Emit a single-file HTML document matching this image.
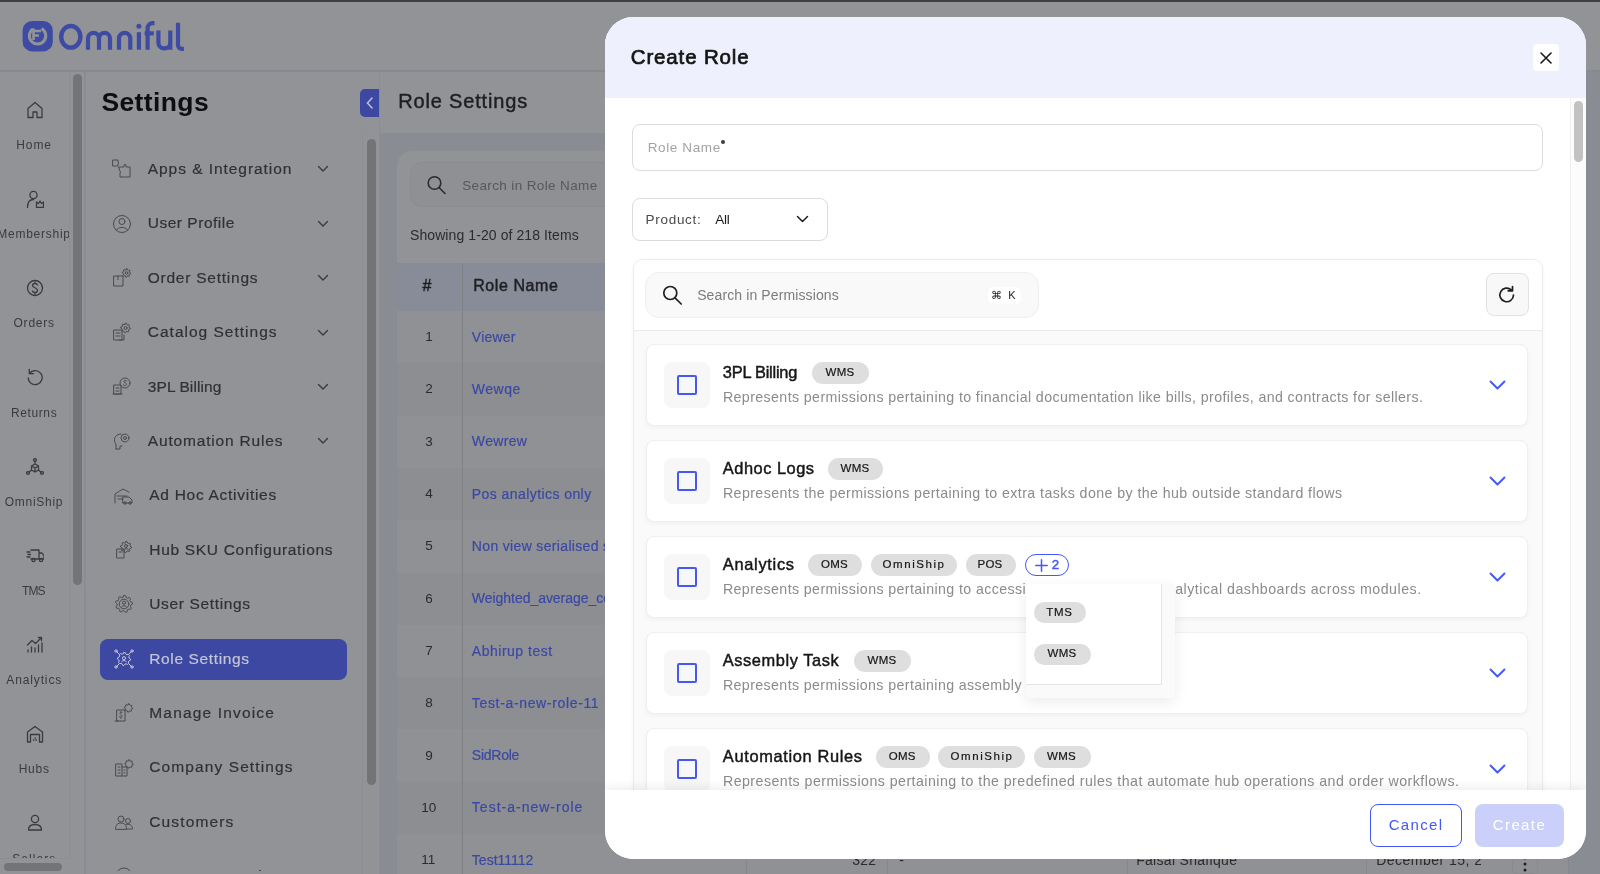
<!DOCTYPE html><html><head><meta charset="utf-8"><style>
html,body{margin:0;padding:0;width:1600px;height:874px;overflow:hidden;}
body{position:relative;font-family:"Liberation Sans", sans-serif;}
.t{position:absolute;white-space:nowrap;line-height:1;}
.r{position:absolute;}
#bg{will-change:transform;position:absolute;left:0;top:0;width:1600px;height:874px;overflow:hidden;}
#modal{will-change:transform;position:absolute;left:605px;top:17px;width:980.5px;height:842px;border-radius:28px;overflow:hidden;background:#fff;}
</style></head><body>
<div id="bg">
<div class="r" style="left:0px;top:0px;width:1600px;height:874px;background:#929397;"></div>
<div class="r" style="left:0px;top:0px;width:1600px;height:2px;background:#3e3f41;"></div>
<div class="r" style="left:0px;top:70px;width:1600px;height:2px;background:#878993;"></div>
<svg class="r" style="left:0px;top:0px;" width="200" height="70" viewBox="0 0 200 70" fill="none"><rect x="22.6" y="21" width="30.2" height="30.4" rx="9.5" fill="#3e4ba4"></rect><path d="M41.5 28.6 A8.2 8.2 0 1 1 33 29" stroke="#929397" stroke-width="3" fill="none"></path><path d="M33.5 28.5 V40 M33.5 31 H41 M34 35.5 H39" stroke="#929397" stroke-width="2.6" fill="none"></path><ellipse cx="70.8" cy="36.8" rx="9.6" ry="10.8" stroke="#3e4ba4" stroke-width="4.4" fill="none"></ellipse><path d="M88 49.7 V38.3 A5.5 5.5 0 0 1 99 38.3 V49.7 M99 38.3 A5.5 5.5 0 0 1 110 38.3 V49.7" stroke="#3e4ba4" stroke-width="4.2" fill="none"></path><path d="M119 49.7 V38.5 A5.65 5.65 0 0 1 130.3 38.5 V49.7" stroke="#3e4ba4" stroke-width="4.2" fill="none"></path><path d="M138.9 32.2 V49.7" stroke="#3e4ba4" stroke-width="4.2"></path><circle cx="138.9" cy="26.3" r="2.5" fill="#3e4ba4"></circle><path d="M147.6 49.7 V28.2 A5 5 0 0 1 152.6 23.2 H154.5 M144.6 33.3 H153.8" stroke="#3e4ba4" stroke-width="4.2" fill="none"></path><path d="M158.4 30.6 V42.5 A5.95 5.95 0 0 0 170.3 42.5 V30.6 M170.3 30.6 V49.7" stroke="#3e4ba4" stroke-width="4.2" fill="none"></path><path d="M178 22.7 V45 A3.8 3.8 0 0 0 181.8 48.8 H183.9" stroke="#3e4ba4" stroke-width="4.2" fill="none"></path></svg>
<div class="r" style="left:69px;top:72px;width:1px;height:786px;background:#8d8e92;"></div>
<div class="r" style="left:84px;top:72px;width:2px;height:802px;background:#8a8c95;"></div>
<div class="r" style="left:73px;top:74px;width:9px;height:511px;background:#737476;border-radius:5px;"></div>
<div class="r" style="left:0px;top:858px;width:69px;height:1px;background:#8d8e92;"></div>
<div class="r" style="left:4px;top:863px;width:58px;height:8px;background:#737476;border-radius:4px;"></div>
<div class="t" style="left: 16.28px; top: 138.9px; font-size: 12px; color: rgb(58, 59, 62); letter-spacing: 0.888px;">Home</div>
<div class="t" style="left: -2.72px; top: 228.1px; font-size: 12px; color: rgb(58, 59, 62); letter-spacing: 0.739px;">Membership</div>
<div class="t" style="left: 13.53px; top: 317.3px; font-size: 12px; color: rgb(58, 59, 62); letter-spacing: 0.765px;">Orders</div>
<div class="t" style="left: 10.88px; top: 406.5px; font-size: 12px; color: rgb(58, 59, 62); letter-spacing: 0.63px;">Returns</div>
<div class="t" style="left: 4.78px; top: 495.7px; font-size: 12px; color: rgb(58, 59, 62); letter-spacing: 0.712px;">OmniShip</div>
<div class="t" style="left: 21.98px; top: 584.9px; font-size: 12px; color: rgb(58, 59, 62); letter-spacing: -0.863px;">TMS</div>
<div class="t" style="left: 6.28px; top: 674.1px; font-size: 12px; color: rgb(58, 59, 62); letter-spacing: 0.873px;">Analytics</div>
<div class="t" style="left: 18.63px; top: 763.3px; font-size: 12px; color: rgb(58, 59, 62); letter-spacing: 0.762px;">Hubs</div>
<div class="t" style="left: 12.28px; top: 852.5px; font-size: 12px; color: rgb(58, 59, 62); letter-spacing: 1.053px;">Sellers</div>
<div class="r" style="left:69px;top:72px;width:1px;height:786px;background:#8d8e92;"></div>
<div class="r" style="left:70px;top:200px;width:3px;height:60px;background:#929397;"></div>
<svg class="r" style="left:25.5px;top:100.7px;" width="18" height="18" viewBox="0 0 18 18" fill="none"><path d="M2 7.5 L9 1.5 L16 7.5 V16.5 H11 V11 H7 V16.5 H2 Z" stroke="#3a3b3e" stroke-width="1.3" fill="none" stroke-linecap="round" stroke-linejoin="round"></path></svg>
<svg class="r" style="left:25.5px;top:189.9px;" width="18" height="18" viewBox="0 0 18 18" fill="none"><circle cx="7.5" cy="5" r="3.6" stroke="#3a3b3e" stroke-width="1.3" fill="none" stroke-linecap="round" stroke-linejoin="round"></circle><path d="M1.5 17.5 C1.5 12 4 9.5 7.5 9.5" stroke="#3a3b3e" stroke-width="1.3" fill="none" stroke-linecap="round" stroke-linejoin="round"></path><path d="M10.5 17.5 V12 L12.5 13.5 L14 11 L15.5 13.5 L17.5 12 V17.5 Z" stroke="#3a3b3e" stroke-width="1.3" fill="none" stroke-linecap="round" stroke-linejoin="round"></path></svg>
<svg class="r" style="left:25.5px;top:279.1px;" width="18" height="18" viewBox="0 0 18 18" fill="none"><circle cx="9" cy="9" r="7.5" stroke="#3a3b3e" stroke-width="1.3" fill="none" stroke-linecap="round" stroke-linejoin="round"></circle><path d="M11.5 6 C11 5 10 4.5 9 4.5 C7.5 4.5 6.5 5.3 6.5 6.5 C6.5 9 11.5 8.5 11.5 11.3 C11.5 12.6 10.4 13.5 9 13.5 C7.8 13.5 6.8 13 6.4 12 M9 3 V4.5 M9 13.5 V15" stroke="#3a3b3e" stroke-width="1.3" fill="none" stroke-linecap="round" stroke-linejoin="round"></path></svg>
<svg class="r" style="left:25.5px;top:368.3px;" width="18" height="18" viewBox="0 0 18 18" fill="none"><path d="M3.5 5.5 A7 7 0 1 1 2.2 10" stroke="#3a3b3e" stroke-width="1.3" fill="none" stroke-linecap="round" stroke-linejoin="round"></path><path d="M3.3 1.5 V5.7 H7.5" stroke="#3a3b3e" stroke-width="1.3" fill="none" stroke-linecap="round" stroke-linejoin="round"></path></svg>
<svg class="r" style="left:25.5px;top:457.5px;" width="18" height="18" viewBox="0 0 18 18" fill="none"><circle cx="9" cy="2" r="1.4" stroke="#3a3b3e" stroke-width="1.3" fill="none" stroke-linecap="round" stroke-linejoin="round"></circle><circle cx="2" cy="15" r="1.4" stroke="#3a3b3e" stroke-width="1.3" fill="none" stroke-linecap="round" stroke-linejoin="round"></circle><circle cx="16" cy="15" r="1.4" stroke="#3a3b3e" stroke-width="1.3" fill="none" stroke-linecap="round" stroke-linejoin="round"></circle><path d="M9 3.4 V6 M5.5 8 L9 6 L12.5 8 V12 L9 14 L5.5 12 Z M5.5 8 L9 10 L12.5 8 M9 10 V14 M5.5 12 L3 14.2 M12.5 12 L15 14.2" stroke="#3a3b3e" stroke-width="1.3" fill="none" stroke-linecap="round" stroke-linejoin="round"></path></svg>
<svg class="r" style="left:25.5px;top:546.7px;" width="18" height="18" viewBox="0 0 18 18" fill="none"><path d="M5 3 H13 V12 H5 M13 6 H16 L18 9 V12 H13" stroke="#3a3b3e" stroke-width="1.3" fill="none" stroke-linecap="round" stroke-linejoin="round"></path><circle cx="7.5" cy="13" r="1.6" stroke="#3a3b3e" stroke-width="1.3" fill="none" stroke-linecap="round" stroke-linejoin="round"></circle><circle cx="15" cy="13" r="1.6" stroke="#3a3b3e" stroke-width="1.3" fill="none" stroke-linecap="round" stroke-linejoin="round"></circle><path d="M1 5 H4 M2 7.5 H4.5 M1 10 H4" stroke="#3a3b3e" stroke-width="1.3" fill="none" stroke-linecap="round" stroke-linejoin="round"></path></svg>
<svg class="r" style="left:25.5px;top:635.9px;" width="18" height="18" viewBox="0 0 18 18" fill="none"><path d="M1.5 9 L6 4.5 L9.5 7.5 L15.5 1.5 M12.5 1.5 H15.5 V4.5" stroke="#3a3b3e" stroke-width="1.3" fill="none" stroke-linecap="round" stroke-linejoin="round"></path><path d="M2 16 V14 M5.5 16 V11 M9 16 V12 M12.5 16 V9 M16 16 V7" stroke="#3a3b3e" stroke-width="1.3" fill="none" stroke-linecap="round" stroke-linejoin="round"></path></svg>
<svg class="r" style="left:25.5px;top:725.1px;" width="18" height="18" viewBox="0 0 18 18" fill="none"><path d="M1.5 17 V7 L9 1.5 L16.5 7 V17 H13.5 V9.5 H4.5 V17 Z" stroke="#3a3b3e" stroke-width="1.3" fill="none" stroke-linecap="round" stroke-linejoin="round"></path><path d="M7.5 15 H8 M10 15 H10.5 M9 13 H9.3" stroke="#3a3b3e" stroke-width="1.3" fill="none" stroke-linecap="round" stroke-linejoin="round"></path></svg>
<svg class="r" style="left:25.5px;top:814.3px;" width="18" height="18" viewBox="0 0 18 18" fill="none"><circle cx="9" cy="5" r="3.6" stroke="#3a3b3e" stroke-width="1.3" fill="none" stroke-linecap="round" stroke-linejoin="round"></circle><path d="M2.5 16 C2.5 12 5 10.5 9 10.5 C13 10.5 15.5 12 15.5 16 Z" stroke="#3a3b3e" stroke-width="1.3" fill="none" stroke-linecap="round" stroke-linejoin="round"></path></svg>
<div class="r" style="left:0px;top:858px;width:69px;height:16px;background:#929397;"></div>
<div class="r" style="left:0px;top:858px;width:69px;height:1px;background:#8d8e92;"></div>
<div class="r" style="left:4px;top:862.5px;width:57.5px;height:8px;background:#737476;border-radius:4px;"></div>
<div class="r" style="left:379px;top:72px;width:1px;height:802px;background:#8a8c95;"></div>
<div class="t" style="left: 101.41px; top: 88.97px; font-size: 26.5px; color: rgb(14, 14, 16); font-weight: 700; letter-spacing: 0.386px;">Settings</div>
<div class="r" style="left:360px;top:89px;width:19px;height:28px;background:#3c48a2;border-radius:5px 0 0 5px;"></div>
<svg class="r" style="left:360px;top:89px;" width="19" height="28" viewBox="0 0 19 28" fill="none"><path d="M12 9 L7.5 14 L12 19" stroke="#b8bcdc" stroke-width="1.6" fill="none" stroke-linecap="round"></path></svg>
<div class="r" style="left:362px;top:133px;width:1px;height:741px;background:#8d8e93;"></div>
<div class="r" style="left:367px;top:139px;width:9px;height:646px;background:#737476;border-radius:5px;"></div>
<div class="r" style="left:100px;top:639px;width:247px;height:41px;background:#3c48a2;border-radius:8px;"></div>
<div class="t" style="left: 147.77px; top: 161.02px; font-size: 15.5px; color: rgb(48, 49, 52); -webkit-text-stroke: 0.2px rgb(48, 49, 52); letter-spacing: 0.947px;">Apps &amp; Integration</div>
<svg class="r" style="left:317px;top:165.4px;" width="12" height="8" viewBox="0 0 12 8" fill="none"><path d="M1.5 1.5 L6 6 L10.5 1.5" stroke="#3a3b3e" stroke-width="1.4" fill="none" stroke-linecap="round"></path></svg>
<svg class="r" style="left:112px;top:159.2px;" width="20" height="20" viewBox="0 0 20 20" fill="none"><path d="M1 1 H6 V3 A1.2 1.2 0 0 1 6 5 V7 H1 Z M7 8 H12 V6 A1.2 1.2 0 0 1 14 6 V8 H18 V18 H8 V14 A1.2 1.2 0 0 0 8 12 Z" stroke="#4a4b4e" stroke-width="1" fill="none" stroke-linecap="round" stroke-linejoin="round"></path></svg>
<div class="t" style="left: 147.77px; top: 215.42px; font-size: 15.5px; color: rgb(48, 49, 52); -webkit-text-stroke: 0.2px rgb(48, 49, 52); letter-spacing: 0.514px;">User Profile</div>
<svg class="r" style="left:317px;top:219.8px;" width="12" height="8" viewBox="0 0 12 8" fill="none"><path d="M1.5 1.5 L6 6 L10.5 1.5" stroke="#3a3b3e" stroke-width="1.4" fill="none" stroke-linecap="round"></path></svg>
<svg class="r" style="left:112px;top:213.6px;" width="20" height="20" viewBox="0 0 20 20" fill="none"><circle cx="10" cy="10" r="8.5" stroke="#4a4b4e" stroke-width="1" fill="none" stroke-linecap="round" stroke-linejoin="round"></circle><circle cx="10" cy="7.5" r="3" stroke="#4a4b4e" stroke-width="1" fill="none" stroke-linecap="round" stroke-linejoin="round"></circle><path d="M4.5 16 C6 12.5 14 12.5 15.5 16" stroke="#4a4b4e" stroke-width="1" fill="none" stroke-linecap="round" stroke-linejoin="round"></path></svg>
<div class="t" style="left: 147.77px; top: 269.82px; font-size: 15.5px; color: rgb(48, 49, 52); -webkit-text-stroke: 0.2px rgb(48, 49, 52); letter-spacing: 0.755px;">Order Settings</div>
<svg class="r" style="left:317px;top:274.2px;" width="12" height="8" viewBox="0 0 12 8" fill="none"><path d="M1.5 1.5 L6 6 L10.5 1.5" stroke="#3a3b3e" stroke-width="1.4" fill="none" stroke-linecap="round"></path></svg>
<svg class="r" style="left:112px;top:268.0px;" width="20" height="20" viewBox="0 0 20 20" fill="none"><path d="M2 8 H11 V18 H2 Z M6 8 V11.5" stroke="#4a4b4e" stroke-width="1" fill="none" stroke-linecap="round" stroke-linejoin="round"></path><path d="M14.50 0.80 L15.32 0.88 L15.69 2.14 L16.22 2.42 L17.47 2.03 L17.99 2.67 L17.36 3.81 L17.54 4.40 L18.70 5.00 L18.62 5.82 L17.36 6.19 L17.08 6.72 L17.47 7.97 L16.83 8.49 L15.69 7.86 L15.10 8.04 L14.50 9.20 L13.68 9.12 L13.31 7.86 L12.78 7.58 L11.53 7.97 L11.01 7.33 L11.64 6.19 L11.46 5.60 L10.30 5.00 L10.38 4.18 L11.64 3.81 L11.92 3.28 L11.53 2.03 L12.17 1.51 L13.31 2.14 L13.90 1.96 Z" stroke="#4a4b4e" stroke-width="1" fill="none" stroke-linecap="round" stroke-linejoin="round"></path><circle cx="14.5" cy="5" r="1.3" stroke="#4a4b4e" stroke-width="1" fill="none" stroke-linecap="round" stroke-linejoin="round"></circle></svg>
<div class="t" style="left: 147.77px; top: 324.22px; font-size: 15.5px; color: rgb(48, 49, 52); -webkit-text-stroke: 0.2px rgb(48, 49, 52); letter-spacing: 1.001px;">Catalog Settings</div>
<svg class="r" style="left:317px;top:328.6px;" width="12" height="8" viewBox="0 0 12 8" fill="none"><path d="M1.5 1.5 L6 6 L10.5 1.5" stroke="#3a3b3e" stroke-width="1.4" fill="none" stroke-linecap="round"></path></svg>
<svg class="r" style="left:112px;top:322.4px;" width="20" height="20" viewBox="0 0 20 20" fill="none"><path d="M2 8 H10 V18 H2 Z M4 11 H8 M4 14 H8 M12 13 V18 H7" stroke="#4a4b4e" stroke-width="1" fill="none" stroke-linecap="round" stroke-linejoin="round"></path><path d="M13.50 1.20 L14.44 1.29 L14.88 2.67 L15.50 3.01 L16.89 2.61 L17.49 3.33 L16.83 4.62 L17.03 5.30 L18.30 6.00 L18.21 6.94 L16.83 7.38 L16.49 8.00 L16.89 9.39 L16.17 9.99 L14.88 9.33 L14.20 9.53 L13.50 10.80 L12.56 10.71 L12.12 9.33 L11.50 8.99 L10.11 9.39 L9.51 8.67 L10.17 7.38 L9.97 6.70 L8.70 6.00 L8.79 5.06 L10.17 4.62 L10.51 4.00 L10.11 2.61 L10.83 2.01 L12.12 2.67 L12.80 2.47 Z" stroke="#4a4b4e" stroke-width="1" fill="none" stroke-linecap="round" stroke-linejoin="round"></path><circle cx="13.5" cy="6" r="1.5" stroke="#4a4b4e" stroke-width="1" fill="none" stroke-linecap="round" stroke-linejoin="round"></circle></svg>
<div class="t" style="left: 147.77px; top: 378.62px; font-size: 15.5px; color: rgb(48, 49, 52); -webkit-text-stroke: 0.2px rgb(48, 49, 52); letter-spacing: 0.088px;">3PL Billing</div>
<svg class="r" style="left:317px;top:383.0px;" width="12" height="8" viewBox="0 0 12 8" fill="none"><path d="M1.5 1.5 L6 6 L10.5 1.5" stroke="#3a3b3e" stroke-width="1.4" fill="none" stroke-linecap="round"></path></svg>
<svg class="r" style="left:112px;top:376.8px;" width="20" height="20" viewBox="0 0 20 20" fill="none"><path d="M2 8 H9 V17 H2 Z M1 17 H10 M4 11 H7 M4 14 H7" stroke="#4a4b4e" stroke-width="1" fill="none" stroke-linecap="round" stroke-linejoin="round"></path><circle cx="13" cy="6" r="5" stroke="#4a4b4e" stroke-width="1" fill="none" stroke-linecap="round" stroke-linejoin="round"></circle><path d="M14.5 4 C13 3 11.5 3.8 12 5 C12.5 6 14.5 6 14.5 7.5 C14.5 8.5 13 9 11.5 8" stroke="#4a4b4e" stroke-width="1" fill="none" stroke-linecap="round" stroke-linejoin="round"></path></svg>
<div class="t" style="left: 147.77px; top: 433.02px; font-size: 15.5px; color: rgb(48, 49, 52); -webkit-text-stroke: 0.2px rgb(48, 49, 52); letter-spacing: 0.827px;">Automation Rules</div>
<svg class="r" style="left:317px;top:437.4px;" width="12" height="8" viewBox="0 0 12 8" fill="none"><path d="M1.5 1.5 L6 6 L10.5 1.5" stroke="#3a3b3e" stroke-width="1.4" fill="none" stroke-linecap="round"></path></svg>
<svg class="r" style="left:112px;top:431.2px;" width="20" height="20" viewBox="0 0 20 20" fill="none"><path d="M4 18 V13 C1 10 2 3 9 3 M4 18 H8 V15 H10" stroke="#4a4b4e" stroke-width="1" fill="none" stroke-linecap="round" stroke-linejoin="round"></path><circle cx="13" cy="7" r="4" stroke="#4a4b4e" stroke-width="1" fill="none" stroke-linecap="round" stroke-linejoin="round"></circle><circle cx="13" cy="7" r="1.5" stroke="#4a4b4e" stroke-width="1" fill="none" stroke-linecap="round" stroke-linejoin="round"></circle></svg>
<div class="t" style="left: 149.27px; top: 487.42px; font-size: 15.5px; color: rgb(48, 49, 52); -webkit-text-stroke: 0.2px rgb(48, 49, 52); letter-spacing: 0.716px;">Ad Hoc Activities</div>
<svg class="r" style="left:114px;top:485.6px;" width="20" height="20" viewBox="0 0 20 20" fill="none"><path d="M1 17 V8 L9 3 L15 6 M3 10 H13 M4 13 H9 M9 11 H15 L18 14 V17 H9 Z" stroke="#4a4b4e" stroke-width="1" fill="none" stroke-linecap="round" stroke-linejoin="round"></path><circle cx="11" cy="17" r="1.3" stroke="#4a4b4e" stroke-width="1" fill="none" stroke-linecap="round" stroke-linejoin="round"></circle><circle cx="16" cy="17" r="1.3" stroke="#4a4b4e" stroke-width="1" fill="none" stroke-linecap="round" stroke-linejoin="round"></circle></svg>
<div class="t" style="left: 149.27px; top: 541.83px; font-size: 15.5px; color: rgb(48, 49, 52); -webkit-text-stroke: 0.2px rgb(48, 49, 52); letter-spacing: 0.69px;">Hub SKU Configurations</div>
<svg class="r" style="left:114px;top:540.0px;" width="20" height="20" viewBox="0 0 20 20" fill="none"><path d="M3 9 H10 V18 H3 Z M5 12 H8" stroke="#4a4b4e" stroke-width="1" fill="none" stroke-linecap="round" stroke-linejoin="round"></path><path d="M12.00 1.50 L13.07 1.61 L13.61 3.12 L14.33 3.51 L15.89 3.11 L16.57 3.94 L15.88 5.39 L16.12 6.18 L17.50 7.00 L17.39 8.07 L15.88 8.61 L15.49 9.33 L15.89 10.89 L15.06 11.57 L13.61 10.88 L12.82 11.12 L12.00 12.50 L10.93 12.39 L10.39 10.88 L9.67 10.49 L8.11 10.89 L7.43 10.06 L8.12 8.61 L7.88 7.82 L6.50 7.00 L6.61 5.93 L8.12 5.39 L8.51 4.67 L8.11 3.11 L8.94 2.43 L10.39 3.12 L11.18 2.88 Z" stroke="#4a4b4e" stroke-width="1" fill="none" stroke-linecap="round" stroke-linejoin="round"></path><circle cx="12" cy="6" r="1.5" stroke="#4a4b4e" stroke-width="1" fill="none" stroke-linecap="round" stroke-linejoin="round"></circle><path d="M9.5 9.5 C10.5 8.3 13.5 8.3 14.5 9.5" stroke="#4a4b4e" stroke-width="1" fill="none" stroke-linecap="round" stroke-linejoin="round"></path></svg>
<div class="t" style="left: 149.27px; top: 596.23px; font-size: 15.5px; color: rgb(48, 49, 52); -webkit-text-stroke: 0.2px rgb(48, 49, 52); letter-spacing: 0.643px;">User Settings</div>
<svg class="r" style="left:114px;top:594.4px;" width="20" height="20" viewBox="0 0 20 20" fill="none"><path d="M10.00 1.50 L11.48 1.63 L12.33 3.61 L13.40 4.11 L15.46 3.49 L16.51 4.54 L15.89 6.60 L16.39 7.67 L18.37 8.52 L18.50 10.00 L16.70 11.18 L16.39 12.33 L17.36 14.25 L16.51 15.46 L14.37 15.21 L13.40 15.89 L12.91 17.99 L11.48 18.37 L10.00 16.80 L8.82 16.70 L7.09 17.99 L5.75 17.36 L5.63 15.21 L4.79 14.37 L2.64 14.25 L2.01 12.91 L3.30 11.18 L3.20 10.00 L1.63 8.52 L2.01 7.09 L4.11 6.60 L4.79 5.63 L4.54 3.49 L5.75 2.64 L7.67 3.61 L8.82 3.30 Z" stroke="#4a4b4e" stroke-width="1" fill="none" stroke-linecap="round" stroke-linejoin="round"></path><circle cx="10" cy="10" r="4.8" stroke="#4a4b4e" stroke-width="1" fill="none" stroke-linecap="round" stroke-linejoin="round"></circle><circle cx="10" cy="8.7" r="1.6" stroke="#4a4b4e" stroke-width="1" fill="none" stroke-linecap="round" stroke-linejoin="round"></circle><path d="M7.6 13 C8.5 11.2 11.5 11.2 12.4 13" stroke="#4a4b4e" stroke-width="1" fill="none" stroke-linecap="round" stroke-linejoin="round"></path></svg>
<div class="t" style="left: 149.27px; top: 650.62px; font-size: 15.5px; color: rgb(196, 198, 212); -webkit-text-stroke: 0.2px rgb(196, 198, 212); letter-spacing: 0.63px;">Role Settings</div>
<svg class="r" style="left:114px;top:648.8px;" width="20" height="20" viewBox="0 0 20 20" fill="none"><path d="M10.00 3.50 L11.27 3.62 L11.99 5.20 L12.89 5.68 L14.60 5.40 L15.40 6.39 L14.80 8.01 L15.10 8.99 L16.50 10.00 L16.38 11.27 L14.80 11.99 L14.32 12.89 L14.60 14.60 L13.61 15.40 L11.99 14.80 L11.01 15.10 L10.00 16.50 L8.73 16.38 L8.01 14.80 L7.11 14.32 L5.40 14.60 L4.60 13.61 L5.20 11.99 L4.90 11.01 L3.50 10.00 L3.62 8.73 L5.20 8.01 L5.68 7.11 L5.40 5.40 L6.39 4.60 L8.01 5.20 L8.99 4.90 Z" stroke="#c4c6d4" stroke-width="1" fill="none" stroke-linecap="round" stroke-linejoin="round"></path><circle cx="10" cy="9.2" r="1.6" stroke="#c4c6d4" stroke-width="1" fill="none" stroke-linecap="round" stroke-linejoin="round"></circle><path d="M7.8 12.6 C8.6 11 11.4 11 12.2 12.6 M2.5 2.5 L5 5 M17.5 2.5 L15 5 M2.5 17.5 L5 15 M17.5 17.5 L15 15" stroke="#c4c6d4" stroke-width="1" fill="none" stroke-linecap="round" stroke-linejoin="round"></path><circle cx="2" cy="2" r="1.2" stroke="#c4c6d4" stroke-width="1" fill="none" stroke-linecap="round" stroke-linejoin="round"></circle><circle cx="18" cy="2" r="1.2" stroke="#c4c6d4" stroke-width="1" fill="none" stroke-linecap="round" stroke-linejoin="round"></circle><circle cx="2" cy="18" r="1.2" stroke="#c4c6d4" stroke-width="1" fill="none" stroke-linecap="round" stroke-linejoin="round"></circle><circle cx="18" cy="18" r="1.2" stroke="#c4c6d4" stroke-width="1" fill="none" stroke-linecap="round" stroke-linejoin="round"></circle></svg>
<div class="t" style="left: 149.27px; top: 705.03px; font-size: 15.5px; color: rgb(48, 49, 52); -webkit-text-stroke: 0.2px rgb(48, 49, 52); letter-spacing: 1.168px;">Manage Invoice</div>
<svg class="r" style="left:114px;top:703.2px;" width="20" height="20" viewBox="0 0 20 20" fill="none"><path d="M3 7 H11 V18 H3 Z M1 18 H4" stroke="#4a4b4e" stroke-width="1" fill="none" stroke-linecap="round" stroke-linejoin="round"></path><path d="M8 9.5 C7 9 5.5 9.5 6 10.8 C6.5 11.8 8 11.8 8 13 C8 14 6.5 14.5 5.5 13.8 M7 8.5 V9.5 M7 14.5 V15.5" stroke="#4a4b4e" stroke-width="1" fill="none" stroke-linecap="round" stroke-linejoin="round"></path><path d="M14.50 0.80 L15.32 0.88 L15.69 2.14 L16.22 2.42 L17.47 2.03 L17.99 2.67 L17.36 3.81 L17.54 4.40 L18.70 5.00 L18.62 5.82 L17.36 6.19 L17.08 6.72 L17.47 7.97 L16.83 8.49 L15.69 7.86 L15.10 8.04 L14.50 9.20 L13.68 9.12 L13.31 7.86 L12.78 7.58 L11.53 7.97 L11.01 7.33 L11.64 6.19 L11.46 5.60 L10.30 5.00 L10.38 4.18 L11.64 3.81 L11.92 3.28 L11.53 2.03 L12.17 1.51 L13.31 2.14 L13.90 1.96 Z" stroke="#4a4b4e" stroke-width="1" fill="none" stroke-linecap="round" stroke-linejoin="round"></path></svg>
<div class="t" style="left: 149.27px; top: 759.42px; font-size: 15.5px; color: rgb(48, 49, 52); -webkit-text-stroke: 0.2px rgb(48, 49, 52); letter-spacing: 1.1px;">Company Settings</div>
<svg class="r" style="left:114px;top:757.6px;" width="20" height="20" viewBox="0 0 20 20" fill="none"><path d="M2 6 H8 V18 H2 Z M8 9 H13 V18 H8 M4 9 H6 M4 12 H6 M4 15 H6 M10 12 H11 M10 15 H11" stroke="#4a4b4e" stroke-width="1" fill="none" stroke-linecap="round" stroke-linejoin="round"></path><path d="M15.00 1.80 L15.82 1.88 L16.19 3.14 L16.72 3.42 L17.97 3.03 L18.49 3.67 L17.86 4.81 L18.04 5.40 L19.20 6.00 L19.12 6.82 L17.86 7.19 L17.58 7.72 L17.97 8.97 L17.33 9.49 L16.19 8.86 L15.60 9.04 L15.00 10.20 L14.18 10.12 L13.81 8.86 L13.28 8.58 L12.03 8.97 L11.51 8.33 L12.14 7.19 L11.96 6.60 L10.80 6.00 L10.88 5.18 L12.14 4.81 L12.42 4.28 L12.03 3.03 L12.67 2.51 L13.81 3.14 L14.40 2.96 Z" stroke="#4a4b4e" stroke-width="1" fill="none" stroke-linecap="round" stroke-linejoin="round"></path></svg>
<div class="t" style="left: 149.27px; top: 813.83px; font-size: 15.5px; color: rgb(48, 49, 52); -webkit-text-stroke: 0.2px rgb(48, 49, 52); letter-spacing: 1.139px;">Customers</div>
<svg class="r" style="left:114px;top:812.0px;" width="20" height="20" viewBox="0 0 20 20" fill="none"><circle cx="7" cy="7" r="3" stroke="#4a4b4e" stroke-width="1" fill="none" stroke-linecap="round" stroke-linejoin="round"></circle><path d="M1.5 17 C1.5 12.5 4 11 7 11 C10 11 12.5 12.5 12.5 17 Z" stroke="#4a4b4e" stroke-width="1" fill="none" stroke-linecap="round" stroke-linejoin="round"></path><circle cx="14" cy="9" r="2.5" stroke="#4a4b4e" stroke-width="1" fill="none" stroke-linecap="round" stroke-linejoin="round"></circle><path d="M12 12.5 C15 11.5 18.5 13 18.5 17 H13" stroke="#4a4b4e" stroke-width="1" fill="none" stroke-linecap="round" stroke-linejoin="round"></path></svg>
<div class="t" style="left: 149.27px; top: 868.22px; font-size: 15.5px; color: rgb(48, 49, 52); -webkit-text-stroke: 0.2px rgb(48, 49, 52); letter-spacing: 0.766px;">Customer Settings</div>
<svg class="r" style="left:114px;top:866.4px;" width="20" height="20" viewBox="0 0 20 20" fill="none"><circle cx="10" cy="10" r="8" stroke="#4a4b4e" stroke-width="1" fill="none" stroke-linecap="round" stroke-linejoin="round"></circle></svg>
<div class="r" style="left:86px;top:871px;width:276px;height:3px;background:#929397;"></div>
<div class="r" style="left:380px;top:133px;width:1220px;height:741px;background:#898c92;"></div>
<div class="r" style="left:1568px;top:72px;width:32px;height:61px;background:#898c92;"></div>
<div class="t" style="left: 398.2px; top: 91.1px; font-size: 20px; color: rgb(30, 31, 33); -webkit-text-stroke: 0.45px rgb(30, 31, 33); letter-spacing: 0.837px;">Role Settings</div>
<div class="r" style="left:397px;top:149.5px;width:1171px;height:725px;background:#929397;border-radius:16px 16px 0 0;border-top:1px solid #8c8d91;box-sizing:border-box;"></div>
<div class="r" style="left:410px;top:162px;width:400px;height:45px;background:#8f9094;border-radius:12px;border:1px solid #8a8b8f;box-sizing:border-box;"></div>
<svg class="r" style="left:426px;top:175px;" width="22" height="20" viewBox="0 0 22 20" fill="none"><circle cx="8.5" cy="8" r="6.3" stroke="#2a2b2d" stroke-width="1.6" fill="none"></circle><path d="M13 12.5 L19 18.5" stroke="#2a2b2d" stroke-width="1.6" stroke-linecap="round"></path></svg>
<div class="t" style="left: 462.19px; top: 178.53px; font-size: 13.5px; color: rgb(87, 88, 91); letter-spacing: 0.372px;">Search in Role Name</div>
<div class="t" style="left: 409.96px; top: 227.6px; font-size: 14px; color: rgb(42, 43, 45); letter-spacing: 0.09px;">Showing 1-20 of 218 Items</div>
<div class="r" style="left:397px;top:263px;width:1171px;height:48px;background:#888b98;"></div>
<div class="r" style="left:462px;top:263px;width:1px;height:611px;background:#7f8187;"></div>
<div class="t" style="left: 422.54px; top: 277.9px; font-size: 16px; color: rgb(30, 31, 33); -webkit-text-stroke: 0.45px rgb(30, 31, 33); letter-spacing: 0px;">#</div>
<div class="t" style="left: 473.24px; top: 277.9px; font-size: 16px; color: rgb(30, 31, 33); -webkit-text-stroke: 0.45px rgb(30, 31, 33); letter-spacing: 0.571px;">Role Name</div>
<div class="r" style="left:397px;top:311.0px;width:1171px;height:52.6px;background:#909195;"></div>
<div class="t" style="left:425.19px;top:330.12px;font-size:13.5px;color:#2a2b2d;">1</div>
<div class="t" style="left: 471.86px; top: 329.7px; font-size: 14px; color: rgb(58, 72, 164); -webkit-text-stroke: 0.2px rgb(58, 72, 164); letter-spacing: 0.224px;">Viewer</div>
<div class="r" style="left:397px;top:363.3px;width:1171px;height:52.6px;background:#8d8e92;"></div>
<div class="t" style="left:425.19px;top:382.43px;font-size:13.5px;color:#2a2b2d;">2</div>
<div class="t" style="left: 471.86px; top: 382px; font-size: 14px; color: rgb(58, 72, 164); -webkit-text-stroke: 0.2px rgb(58, 72, 164); letter-spacing: 0.489px;">Wewqe</div>
<div class="r" style="left:397px;top:415.6px;width:1171px;height:52.6px;background:#909195;"></div>
<div class="t" style="left:425.19px;top:434.73px;font-size:13.5px;color:#2a2b2d;">3</div>
<div class="t" style="left: 471.86px; top: 434.3px; font-size: 14px; color: rgb(58, 72, 164); -webkit-text-stroke: 0.2px rgb(58, 72, 164); letter-spacing: 0.319px;">Wewrew</div>
<div class="r" style="left:397px;top:467.9px;width:1171px;height:52.6px;background:#8d8e92;"></div>
<div class="t" style="left:425.19px;top:487.02px;font-size:13.5px;color:#2a2b2d;">4</div>
<div class="t" style="left: 471.86px; top: 486.6px; font-size: 14px; color: rgb(58, 72, 164); -webkit-text-stroke: 0.2px rgb(58, 72, 164); letter-spacing: 0.426px;">Pos analytics only</div>
<div class="r" style="left:397px;top:520.2px;width:1171px;height:52.6px;background:#909195;"></div>
<div class="t" style="left:425.19px;top:539.33px;font-size:13.5px;color:#2a2b2d;">5</div>
<div class="t" style="left: 471.86px; top: 538.9px; font-size: 14px; color: rgb(58, 72, 164); -webkit-text-stroke: 0.2px rgb(58, 72, 164); letter-spacing: 0.336px;">Non view serialised skus</div>
<div class="r" style="left:397px;top:572.5px;width:1171px;height:52.6px;background:#8d8e92;"></div>
<div class="t" style="left:425.19px;top:591.62px;font-size:13.5px;color:#2a2b2d;">6</div>
<div class="t" style="left: 471.86px; top: 591.2px; font-size: 14px; color: rgb(58, 72, 164); -webkit-text-stroke: 0.2px rgb(58, 72, 164); letter-spacing: -0.042px;">Weighted_average_cost</div>
<div class="r" style="left:397px;top:624.8px;width:1171px;height:52.6px;background:#909195;"></div>
<div class="t" style="left:425.19px;top:643.92px;font-size:13.5px;color:#2a2b2d;">7</div>
<div class="t" style="left: 471.86px; top: 643.5px; font-size: 14px; color: rgb(58, 72, 164); -webkit-text-stroke: 0.2px rgb(58, 72, 164); letter-spacing: 0.507px;">Abhirup test</div>
<div class="r" style="left:397px;top:677.1px;width:1171px;height:52.6px;background:#8d8e92;"></div>
<div class="t" style="left:425.19px;top:696.22px;font-size:13.5px;color:#2a2b2d;">8</div>
<div class="t" style="left: 471.86px; top: 695.8px; font-size: 14px; color: rgb(58, 72, 164); -webkit-text-stroke: 0.2px rgb(58, 72, 164); letter-spacing: 0.654px;">Test-a-new-role-11</div>
<div class="r" style="left:397px;top:729.4px;width:1171px;height:52.6px;background:#909195;"></div>
<div class="t" style="left:425.19px;top:748.52px;font-size:13.5px;color:#2a2b2d;">9</div>
<div class="t" style="left: 471.86px; top: 748.1px; font-size: 14px; color: rgb(58, 72, 164); -webkit-text-stroke: 0.2px rgb(58, 72, 164); letter-spacing: -0.257px;">SidRole</div>
<div class="r" style="left:397px;top:781.7px;width:1171px;height:52.6px;background:#8d8e92;"></div>
<div class="t" style="left:421.19px;top:800.83px;font-size:13.5px;color:#2a2b2d;">10</div>
<div class="t" style="left: 471.86px; top: 800.4px; font-size: 14px; color: rgb(58, 72, 164); -webkit-text-stroke: 0.2px rgb(58, 72, 164); letter-spacing: 1.001px;">Test-a-new-role</div>
<div class="r" style="left:397px;top:834.0px;width:1171px;height:52.6px;background:#909195;"></div>
<div class="t" style="left:421.19px;top:853.12px;font-size:13.5px;color:#2a2b2d;">11</div>
<div class="t" style="left:471.86px;top:852.70px;font-size:14px;color:#3a48a4;-webkit-text-stroke:0.2px #3a48a4;">Test11112</div>
<div class="r" style="left:462px;top:263px;width:1px;height:611px;background:#7f8187;"></div>
<div class="r" style="left:746px;top:834px;width:1px;height:40px;background:#85878c;"></div>
<div class="r" style="left:887px;top:834px;width:1px;height:40px;background:#85878c;"></div>
<div class="r" style="left:1126.5px;top:834px;width:1px;height:40px;background:#85878c;"></div>
<div class="r" style="left:1365.5px;top:834px;width:1px;height:40px;background:#85878c;"></div>
<div class="t" style="left: 852.16px; top: 852.7px; font-size: 14px; color: rgb(42, 43, 45); letter-spacing: 0.214px;">322</div>
<div class="t" style="left:899.16px;top:852.70px;font-size:14px;color:#2a2b2d;">-</div>
<div class="t" style="left: 1136.16px; top: 852.7px; font-size: 14px; color: rgb(42, 43, 45); letter-spacing: 0.306px;">Faisal Shafique</div>
<div class="t" style="left: 1376.16px; top: 852.7px; font-size: 14px; color: rgb(42, 43, 45); letter-spacing: 0.489px;">December 15, 2023</div>
<div class="r" style="left:1481px;top:834px;width:87px;height:40px;background:#909195;"></div>
<div class="r" style="left:1512px;top:838px;width:25.5px;height:36px;background:transparent;border:1px solid #8a8b8f;border-radius:4px;box-sizing:border-box;"></div>
<svg class="r" style="left:1521px;top:852px;" width="8" height="22" viewBox="0 0 8 22" fill="none"><circle cx="4" cy="6" r="1.5" fill="#1e1f21"></circle><circle cx="4" cy="12" r="1.5" fill="#1e1f21"></circle><circle cx="4" cy="18" r="1.5" fill="#1e1f21"></circle></svg>
<div class="r" style="left:1568px;top:133px;width:1px;height:741px;background:#86888d;"></div>
</div>
<div id="modal">
<div class="r" style="left:0px;top:0px;width:981px;height:80.5px;background:#eef0fd;"></div>
<div class="t" style="left: 25.77px; top: 29.87px; font-size: 20.5px; color: rgb(20, 20, 20); -webkit-text-stroke: 0.7px rgb(20, 20, 20); letter-spacing: 0.851px;">Create Role</div>
<div class="r" style="left:928px;top:27px;width:26px;height:27px;background:#ffffff;border-radius:4px;"></div>
<svg class="r" style="left:935px;top:34.5px;" width="12" height="12" viewBox="0 0 12 12" fill="none"><path d="M1 1 L11 11 M11 1 L1 11" stroke="#1a1a1a" stroke-width="1.6" stroke-linecap="round"></path></svg>
<div class="r" style="left:964.5px;top:80.5px;width:16px;height:693px;background:#fcfcfc;border-left:1px solid #efefef;box-sizing:border-box;"></div>
<div class="r" style="left:968.5px;top:84px;width:9px;height:60.5px;background:#c2c2c2;border-radius:5px;"></div>
<div class="r" style="left:27px;top:107px;width:910.5px;height:47px;background:#fff;border:1px solid #dcdcdc;border-radius:8px;box-sizing:border-box;"></div>
<div class="t" style="left: 42.69px; top: 124.03px; font-size: 13.5px; color: rgb(163, 163, 163); letter-spacing: 0.623px;">Role Name</div>
<div class="r" style="left:115.5px;top:122.5px;width:4px;height:4px;background:#3d3d3d;border-radius:50%;"></div>
<div class="r" style="left:27px;top:181px;width:195.5px;height:42.5px;background:#fff;border:1px solid #dcdcdc;border-radius:8px;box-sizing:border-box;"></div>
<div class="t" style="left: 40.59px; top: 195.62px; font-size: 13.5px; color: rgb(74, 74, 74); letter-spacing: 0.696px;">Product:</div>
<div class="t" style="left: 110.19px; top: 195.62px; font-size: 13.5px; color: rgb(26, 26, 26); letter-spacing: -0.202px;">All</div>
<svg class="r" style="left:191px;top:198px;" width="13" height="9" viewBox="0 0 13 9" fill="none"><path d="M1.5 1.5 L6.5 6.5 L11.5 1.5" stroke="#1f1f1f" stroke-width="1.5" fill="none" stroke-linecap="round" stroke-linejoin="round"></path></svg>
<div class="r" style="left:27.5px;top:242px;width:910px;height:560px;background:#fafafa;border:1px solid #ececec;border-radius:10px;box-sizing:border-box;box-shadow:0 1px 4px rgba(0,0,0,0.04);"></div>
<div class="r" style="left:28.5px;top:243px;width:908px;height:70px;background:#ffffff;border-radius:9px 9px 0 0;border-bottom:1px solid #ececec;"></div>
<div class="r" style="left:40px;top:255px;width:393.5px;height:45.5px;background:#f9f9f9;border:1px solid #efefef;border-radius:14px;box-sizing:border-box;"></div>
<svg class="r" style="left:57px;top:268px;" width="22" height="21" viewBox="0 0 22 21" fill="none"><circle cx="8.3" cy="8" r="6.5" stroke="#1f1f1f" stroke-width="1.7" fill="none"></circle><path d="M13 12.8 L19.2 19" stroke="#1f1f1f" stroke-width="1.7" stroke-linecap="round"></path></svg>
<div class="t" style="left: 92.16px; top: 271.1px; font-size: 14px; color: rgb(124, 124, 124); letter-spacing: 0.116px;">Search in Permissions</div>
<div class="r" style="left:382.5px;top:269.5px;width:33px;height:17.5px;background:#ffffff;border-radius:6px;"></div>
<div class="t" style="left: 386.34px; top: 272.65px; font-size: 11px; color: rgb(34, 34, 34); letter-spacing: 1.472px;">⌘ K</div>
<div class="r" style="left:881px;top:256px;width:43px;height:43px;background:#f8f8f8;border:1px solid #e2e2e2;border-radius:8px;box-sizing:border-box;"></div>
<svg class="r" style="left:892px;top:268px;" width="20" height="20" viewBox="0 0 20 20" fill="none"><path d="M16.5 10 A6.8 6.8 0 1 1 14.3 4.9" stroke="#1f1f1f" stroke-width="1.7" fill="none" stroke-linecap="round"></path><path d="M15.5 1.5 V5.8 H11.2" stroke="#1f1f1f" stroke-width="1.7" fill="none" stroke-linecap="round" stroke-linejoin="round"></path></svg>
<div class="r" style="left:41.3px;top:327px;width:882px;height:81.5px;background:#ffffff;border:1px solid #efefef;border-radius:8px;box-sizing:border-box;box-shadow:0 2px 4px rgba(0,0,0,0.04);"></div>
<div class="r" style="left:59px;top:345px;width:46px;height:46px;background:#f7f7f7;border-radius:8px;"></div>
<div class="r" style="left:72px;top:358.3px;width:19.7px;height:19.5px;background:transparent;border:2px solid #4358f5;border-radius:2px;box-sizing:border-box;"></div>
<div class="t" style="left: 117.82px; top: 346.86px; font-size: 16.4px; color: rgb(22, 22, 22); -webkit-text-stroke: 0.45px rgb(22, 22, 22); letter-spacing: -0.233px;">3PL Billing</div>
<div class="r" style="left:207.3px;top:345.2px;width:57px;height:21.5px;background:#dedede;border-radius:11px;"></div>
<div class="t" style="left: 220.61px; top: 349.73px; font-size: 11.5px; color: rgb(22, 22, 22); -webkit-text-stroke: 0.2px rgb(22, 22, 22); letter-spacing: 0.283px;">WMS</div>
<div class="t" style="left: 117.95px; top: 373.23px; font-size: 14.2px; color: rgb(139, 139, 139); letter-spacing: 0.399px;">Represents permissions pertaining to financial documentation like bills, profiles, and contracts for sellers.</div>
<svg class="r" style="left:884px;top:362.5px;" width="17" height="11" viewBox="0 0 17 11" fill="none"><path d="M1.5 1.5 L8.5 8.5 L15.5 1.5" stroke="#4358f5" stroke-width="1.9" fill="none" stroke-linecap="round" stroke-linejoin="round"></path></svg>
<div class="r" style="left:41.3px;top:423px;width:882px;height:81.5px;background:#ffffff;border:1px solid #efefef;border-radius:8px;box-sizing:border-box;box-shadow:0 2px 4px rgba(0,0,0,0.04);"></div>
<div class="r" style="left:59px;top:441px;width:46px;height:46px;background:#f7f7f7;border-radius:8px;"></div>
<div class="r" style="left:72px;top:454.3px;width:19.7px;height:19.5px;background:transparent;border:2px solid #4358f5;border-radius:2px;box-sizing:border-box;"></div>
<div class="t" style="left: 117.82px; top: 442.86px; font-size: 16.4px; color: rgb(22, 22, 22); -webkit-text-stroke: 0.45px rgb(22, 22, 22); letter-spacing: 0.514px;">Adhoc Logs</div>
<div class="r" style="left:223.3px;top:441.2px;width:55px;height:21.5px;background:#dedede;border-radius:11px;"></div>
<div class="t" style="left: 235.61px; top: 445.73px; font-size: 11.5px; color: rgb(22, 22, 22); -webkit-text-stroke: 0.2px rgb(22, 22, 22); letter-spacing: 0.283px;">WMS</div>
<div class="t" style="left: 117.95px; top: 469.23px; font-size: 14.2px; color: rgb(139, 139, 139); letter-spacing: 0.421px;">Represents the permissions pertaining to extra tasks done by the hub outside standard flows</div>
<svg class="r" style="left:884px;top:458.5px;" width="17" height="11" viewBox="0 0 17 11" fill="none"><path d="M1.5 1.5 L8.5 8.5 L15.5 1.5" stroke="#4358f5" stroke-width="1.9" fill="none" stroke-linecap="round" stroke-linejoin="round"></path></svg>
<div class="r" style="left:41.3px;top:519px;width:882px;height:81.5px;background:#ffffff;border:1px solid #efefef;border-radius:8px;box-sizing:border-box;box-shadow:0 2px 4px rgba(0,0,0,0.04);"></div>
<div class="r" style="left:59px;top:537px;width:46px;height:46px;background:#f7f7f7;border-radius:8px;"></div>
<div class="r" style="left:72px;top:550.3px;width:19.7px;height:19.5px;background:transparent;border:2px solid #4358f5;border-radius:2px;box-sizing:border-box;"></div>
<div class="t" style="left: 117.82px; top: 538.86px; font-size: 16.4px; color: rgb(22, 22, 22); -webkit-text-stroke: 0.45px rgb(22, 22, 22); letter-spacing: 0.701px;">Analytics</div>
<div class="r" style="left:203.3px;top:537.2px;width:53.7px;height:21.5px;background:#dedede;border-radius:11px;"></div>
<div class="t" style="left: 215.96px; top: 541.73px; font-size: 11.5px; color: rgb(22, 22, 22); -webkit-text-stroke: 0.2px rgb(22, 22, 22); letter-spacing: 0.238px;">OMS</div>
<div class="r" style="left:265.5px;top:537.2px;width:86.6px;height:21.5px;background:#dedede;border-radius:11px;"></div>
<div class="t" style="left: 277.61px; top: 541.73px; font-size: 11.5px; color: rgb(22, 22, 22); -webkit-text-stroke: 0.2px rgb(22, 22, 22); letter-spacing: 1.558px;">OmniShip</div>
<div class="r" style="left:360.6px;top:537.2px;width:50.4px;height:21.5px;background:#dedede;border-radius:11px;"></div>
<div class="t" style="left: 372.61px; top: 541.73px; font-size: 11.5px; color: rgb(22, 22, 22); -webkit-text-stroke: 0.2px rgb(22, 22, 22); letter-spacing: 0.192px;">POS</div>
<div class="r" style="left:420.1px;top:537.2px;width:44px;height:21.5px;background:transparent;border:1px solid #4358f5;border-radius:11px;box-sizing:border-box;"></div>
<svg class="r" style="left:430px;top:541.5px;" width="13" height="13" viewBox="0 0 13 13" fill="none"><path d="M6.5 0.8 V12.2 M0.8 6.5 H12.2" stroke="#4358f5" stroke-width="1.5" stroke-linecap="round"></path></svg>
<div class="t" style="left: 446.7px; top: 540.5px; font-size: 13.3px; color: rgb(67, 88, 245); -webkit-text-stroke: 0.45px rgb(67, 88, 245); letter-spacing: 0px;">2</div>
<div class="t" style="left: 117.95px; top: 565.23px; font-size: 14.2px; color: rgb(139, 139, 139); letter-spacing: 0.4px;">Represents permissions pertaining to accessi</div>
<div class="t" style="left: 570.15px; top: 565.23px; font-size: 14.2px; color: rgb(139, 139, 139); letter-spacing: 0.507px;">alytical dashboards across modules.</div>
<svg class="r" style="left:884px;top:554.5px;" width="17" height="11" viewBox="0 0 17 11" fill="none"><path d="M1.5 1.5 L8.5 8.5 L15.5 1.5" stroke="#4358f5" stroke-width="1.9" fill="none" stroke-linecap="round" stroke-linejoin="round"></path></svg>
<div class="r" style="left:41.3px;top:615px;width:882px;height:81.5px;background:#ffffff;border:1px solid #efefef;border-radius:8px;box-sizing:border-box;box-shadow:0 2px 4px rgba(0,0,0,0.04);"></div>
<div class="r" style="left:59px;top:633px;width:46px;height:46px;background:#f7f7f7;border-radius:8px;"></div>
<div class="r" style="left:72px;top:646.3px;width:19.7px;height:19.5px;background:transparent;border:2px solid #4358f5;border-radius:2px;box-sizing:border-box;"></div>
<div class="t" style="left: 117.82px; top: 634.86px; font-size: 16.4px; color: rgb(22, 22, 22); -webkit-text-stroke: 0.45px rgb(22, 22, 22); letter-spacing: 0.575px;">Assembly Task</div>
<div class="r" style="left:249.3px;top:633.2px;width:57px;height:21.5px;background:#dedede;border-radius:11px;"></div>
<div class="t" style="left: 262.61px; top: 637.73px; font-size: 11.5px; color: rgb(22, 22, 22); -webkit-text-stroke: 0.2px rgb(22, 22, 22); letter-spacing: 0.283px;">WMS</div>
<div class="t" style="left: 117.95px; top: 661.23px; font-size: 14.2px; color: rgb(139, 139, 139); letter-spacing: 0.397px;">Represents permissions pertaining assembly</div>
<svg class="r" style="left:884px;top:650.5px;" width="17" height="11" viewBox="0 0 17 11" fill="none"><path d="M1.5 1.5 L8.5 8.5 L15.5 1.5" stroke="#4358f5" stroke-width="1.9" fill="none" stroke-linecap="round" stroke-linejoin="round"></path></svg>
<div class="r" style="left:41.3px;top:711px;width:882px;height:81.5px;background:#ffffff;border:1px solid #efefef;border-radius:8px;box-sizing:border-box;box-shadow:0 2px 4px rgba(0,0,0,0.04);"></div>
<div class="r" style="left:59px;top:729px;width:46px;height:46px;background:#f7f7f7;border-radius:8px;"></div>
<div class="r" style="left:72px;top:742.3px;width:19.7px;height:19.5px;background:transparent;border:2px solid #4358f5;border-radius:2px;box-sizing:border-box;"></div>
<div class="t" style="left: 117.82px; top: 730.86px; font-size: 16.4px; color: rgb(22, 22, 22); -webkit-text-stroke: 0.45px rgb(22, 22, 22); letter-spacing: 0.655px;">Automation Rules</div>
<div class="r" style="left:271.3px;top:729.2px;width:53.5px;height:21.5px;background:#dedede;border-radius:11px;"></div>
<div class="t" style="left: 283.86px; top: 733.73px; font-size: 11.5px; color: rgb(22, 22, 22); -webkit-text-stroke: 0.2px rgb(22, 22, 22); letter-spacing: 0.238px;">OMS</div>
<div class="r" style="left:333.3px;top:729.2px;width:87px;height:21.5px;background:#dedede;border-radius:11px;"></div>
<div class="t" style="left: 345.61px; top: 733.73px; font-size: 11.5px; color: rgb(22, 22, 22); -webkit-text-stroke: 0.2px rgb(22, 22, 22); letter-spacing: 1.558px;">OmniShip</div>
<div class="r" style="left:428.8px;top:729.2px;width:57px;height:21.5px;background:#dedede;border-radius:11px;"></div>
<div class="t" style="left: 442.11px; top: 733.73px; font-size: 11.5px; color: rgb(22, 22, 22); -webkit-text-stroke: 0.2px rgb(22, 22, 22); letter-spacing: 0.283px;">WMS</div>
<div class="t" style="left: 117.95px; top: 757.23px; font-size: 14.2px; color: rgb(139, 139, 139); letter-spacing: 0.463px;">Represents permissions pertaining to the predefined rules that automate hub operations and order workflows.</div>
<svg class="r" style="left:884px;top:746.5px;" width="17" height="11" viewBox="0 0 17 11" fill="none"><path d="M1.5 1.5 L8.5 8.5 L15.5 1.5" stroke="#4358f5" stroke-width="1.9" fill="none" stroke-linecap="round" stroke-linejoin="round"></path></svg>
<div class="r" style="left:420.7px;top:566.6px;width:149.5px;height:114.6px;background:#fafafa;box-shadow:0 4px 14px rgba(0,0,0,0.08);border-radius:2px;"></div>
<div class="r" style="left:420.7px;top:566.6px;width:135px;height:100px;background:#ffffff;border-right:1px solid #e6e6e6;border-bottom:1px solid #e6e6e6;"></div>
<div class="r" style="left:429.4px;top:585px;width:51.2px;height:21.2px;background:#dedede;border-radius:11px;"></div>
<div class="t" style="left: 441.31px; top: 589.52px; font-size: 11.5px; color: rgb(22, 22, 22); -webkit-text-stroke: 0.2px rgb(22, 22, 22); letter-spacing: 0.698px;">TMS</div>
<div class="r" style="left:429.4px;top:626.7px;width:56.6px;height:21.2px;background:#dedede;border-radius:11px;"></div>
<div class="t" style="left: 442.51px; top: 631.23px; font-size: 11.5px; color: rgb(22, 22, 22); -webkit-text-stroke: 0.2px rgb(22, 22, 22); letter-spacing: 0.283px;">WMS</div>
<div class="r" style="left:0px;top:773px;width:981px;height:69.5px;background:#ffffff;box-shadow:0 -3px 10px rgba(0,0,0,0.07);"></div>
<div class="r" style="left:765.3px;top:787px;width:91.5px;height:43px;background:#ffffff;border:1px solid #4358f5;border-radius:8px;box-sizing:border-box;"></div>
<div class="t" style="left: 783.7px; top: 800.25px; font-size: 15px; color: rgb(67, 88, 245); letter-spacing: 1.328px;">Cancel</div>
<div class="r" style="left:870px;top:787px;width:89.3px;height:43px;background:#cbd0fa;border-radius:8px;"></div>
<div class="t" style="left: 887.8px; top: 800.25px; font-size: 15px; color: rgb(255, 255, 255); letter-spacing: 1.384px;">Create</div>
</div>
</body></html>
